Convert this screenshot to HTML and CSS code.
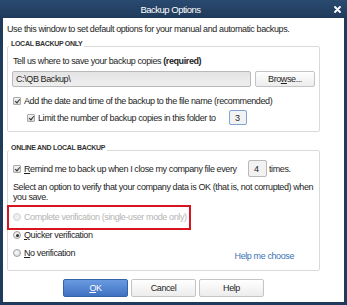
FILE: index.html
```html
<!DOCTYPE html>
<html lang="en">
<head>
    <meta charset="UTF-8">
    <title>Backup Options</title>
    <link rel="stylesheet" href="styles.css">
</head>
<body>
    <div class="window">
        <div class="titlebar">
            <span class="title">Backup Options</span>
            <svg class="close" width="7" height="7" viewBox="0 0 7 7">
                <path d="M1 1 L6 6 M6 1 L1 6" stroke="#fff" stroke-width="1.8" stroke-linecap="round"/>
            </svg>
        </div>

        <div class="content">
            <p class="intro">Use this window to set default options for your manual and automatic backups.</p>

            <fieldset class="group">
                <legend>LOCAL BACKUP ONLY</legend>
                <div class="line">Tell us where to save your backup copies <b>(required)</b></div>

                <div class="path-row">
                    <div class="field path">C:\QB Backup\</div>
                    <button class="btn browse">Bro<u>w</u>se...</button>
                </div>

                <div class="check-row first">
                    <span class="check on"></span>
                    <span>Add the date and time of the backup to the file name (recommended)</span>
                </div>

                <div class="check-row sub">
                    <span class="check on"></span>
                    <span class="limit-label">Limit the number of backup copies in this folder to</span>
                    <div class="field num focus">3</div>
                </div>
            </fieldset>

            <fieldset class="group second">
                <legend>ONLINE AND LOCAL BACKUP</legend>

                <div class="check-row remind">
                    <span class="check on"></span>
                    <span class="remind-label"><u>R</u>emind me to back up when I close my company file every</span>
                    <div class="field num tall">4</div>
                    <span class="times">times.</span>
                </div>

                <p class="select-text">Select an option to verify that your company data is OK (that is, not corrupted) when you save.</p>

                <div class="radio-row disabled complete">
                    <span class="radio"></span>
                    <span>Complete verification (single-user mode only)</span>
                    <span class="mark"></span>
                </div>
                <div class="radio-row">
                    <span class="radio on"></span>
                    <span><u>Q</u>uicker verification</span>
                </div>
                <div class="radio-row last">
                    <span class="radio"></span>
                    <span><u>N</u>o verification</span>
                    <a class="help-link" href="#">Help me choose</a>
                </div>
            </fieldset>

            <div class="buttons">
                <button class="btn primary"><u>O</u>K</button>
                <button class="btn">Cancel</button>
                <button class="btn">Help</button>
            </div>
        </div>
    </div>
</body>
</html>
```

FILE: styles.css
```css
:root {
    --navy: #1f3a5b;
    --navy-light: #2a4a70;
    --text: #1e1e1e;
    --muted: #b4b4b4;
    --border: #d9d9d9;
    --link: #3b74b8;
    --mark: #d8151f;
}

* {
    box-sizing: border-box;
}

body {
    margin: 0;
    font-family: "Liberation Sans", Arial, sans-serif;
    font-size: 9px;
    letter-spacing: -0.4px;
    color: var(--text);
    background: #fff;
}

.window {
    width: 347px;
    height: 305px;
    background: var(--navy);
    padding: 0 3px 3px;
    display: flex;
    flex-direction: column;
}

.titlebar {
    height: 18px;
    display: flex;
    align-items: center;
    justify-content: center;
    position: relative;
    background: linear-gradient(var(--navy-light), var(--navy));
    margin: 0 -3px;
}

.title {
    color: #fff;
    font-size: 9.5px;
    letter-spacing: -0.5px;
    margin-left: -6px;
}

.close {
    position: absolute;
    right: 6px;
    top: 6px;
}

.content {
    flex: 1;
    background: #fff;
    padding: 5px 24px 0 4px;
}

.intro {
    margin: 0;
    line-height: 12px;
    white-space: nowrap;
}

.group {
    margin: 5px 0 0;
    padding: 0 4px 6px 5px;
    border: 1px solid var(--border);
    border-radius: 2px;
}

.group.second {
    margin-top: 12px;
    padding-bottom: 11px;
}

.group legend {
    font-size: 7px;
    font-weight: bold;
    letter-spacing: -0.3px;
    line-height: 8px;
    padding: 0 2px 5px;
    margin-left: -4px;
    color: #333;
}

.line {
    margin-top: 2px;
    line-height: 12px;
}

.path-row {
    display: flex;
    gap: 4px;
    margin-top: 4px;
    height: 16px;
}

.field {
    border: 1px solid #b9b9b9;
    border-radius: 2px;
    background: linear-gradient(#e4e4e4, #eeeeee);
    display: flex;
    align-items: center;
    padding-left: 3px;
}

.path {
    flex: 1;
    margin-left: -1px;
}

.btn {
    font: inherit;
    letter-spacing: inherit;
    color: var(--text);
    border: 1px solid #c4c4c4;
    border-radius: 2px;
    background: linear-gradient(#ffffff, #ececec);
    padding: 0;
    cursor: pointer;
}

.browse {
    width: 60px;
}

.check-row,
.radio-row {
    display: flex;
    align-items: center;
    height: 12px;
    white-space: nowrap;
}

.check-row.first {
    margin-top: 8px;
}

.check-row.sub {
    margin-top: 3px;
    height: 15px;
    padding-left: 14px;
}

.check {
    width: 8px;
    height: 8px;
    border: 1px solid #a9a9a9;
    border-radius: 1px;
    background: linear-gradient(#f2f2f2, #d9d9d9);
    margin-right: 3px;
    flex: none;
    position: relative;
}

.check.on::after {
    content: "";
    position: absolute;
    left: 1.5px;
    top: 0;
    width: 2px;
    height: 4px;
    border: solid #333;
    border-width: 0 1.3px 1.3px 0;
    transform: rotate(40deg);
}

.limit-label {
    width: 191px;
}

.num {
    width: 18px;
    height: 15px;
    padding-left: 5px;
    background: #f2f2f2;
}

.num.focus {
    border-color: #7ea4d4;
}

.check-row.remind {
    margin-top: 3px;
    height: 17px;
}

.remind-label {
    width: 224px;
}

.num.tall {
    width: 19px;
    height: 17px;
}

.times {
    margin-left: 2px;
}

.select-text {
    margin: 5px 0 0;
    line-height: 10px;
}

.radio-row {
    margin-top: 6px;
}

.radio-row.complete {
    margin-top: 9px;
    position: relative;
}

.radio {
    width: 8px;
    height: 8px;
    border: 1px solid #9e9e9e;
    border-radius: 50%;
    background: radial-gradient(circle at 40% 35%, #fafafa, #d4d4d4);
    margin-right: 3px;
    flex: none;
    position: relative;
}

.radio.on::after {
    content: "";
    position: absolute;
    left: 1.5px;
    top: 1.5px;
    width: 3px;
    height: 3px;
    border-radius: 50%;
    background: #333;
}

.disabled {
    color: var(--muted);
}

.disabled .radio {
    border-color: #d2d2d2;
    background: #eeeeee;
}

.mark {
    position: absolute;
    left: -6px;
    top: -6px;
    width: 184px;
    height: 25px;
    border: 2.5px solid var(--mark);
}

.radio-row.last {
    padding-right: 21px;
}

.help-link {
    margin-left: auto;
    margin-top: 6px;
    color: var(--link);
    text-decoration: none;
}

.buttons {
    display: flex;
    justify-content: center;
    gap: 3px;
    margin-top: 8px;
}

.buttons .btn {
    width: 65px;
    height: 18px;
}

.btn.primary {
    color: #fff;
    border-color: #3563a8;
    background: linear-gradient(#6a9be0, #3f71c3);
}
```
